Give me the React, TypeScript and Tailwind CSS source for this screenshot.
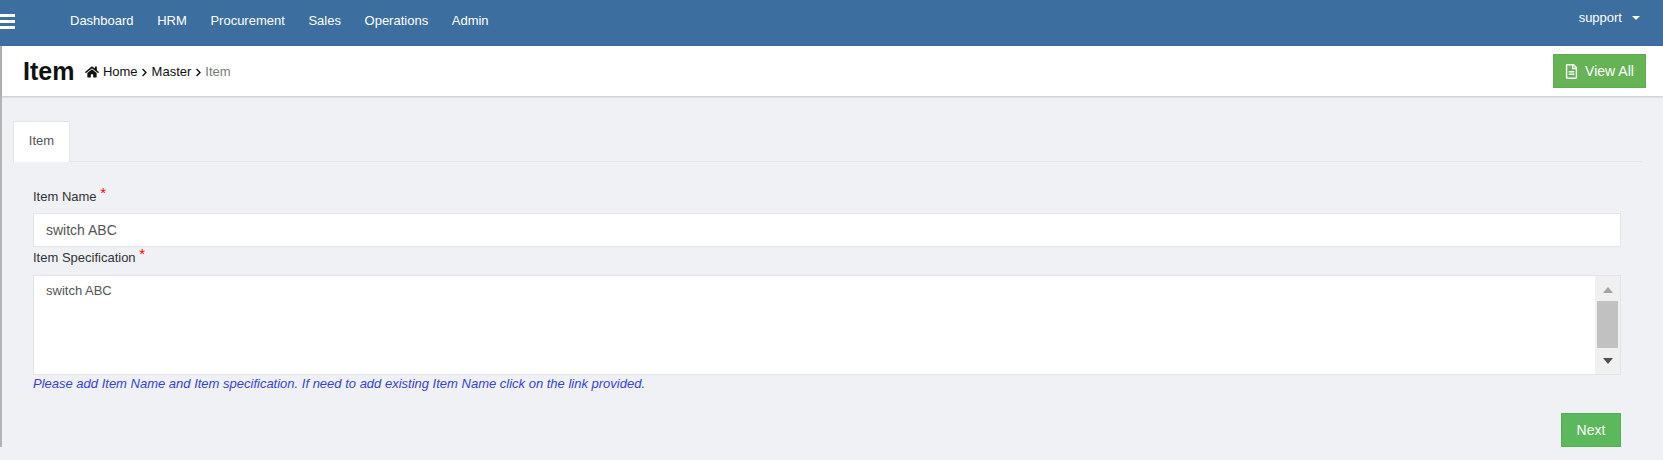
import { FaChevronRight, FaHome, FaRegFileAlt } from 'react-icons/fa';

const navItems = ['Dashboard', 'HRM', 'Procurement', 'Sales', 'Operations', 'Admin'];

function Crumb({ label, muted = false }: { label: string; muted?: boolean }) {
  return <span className={muted ? 'text-[#777]' : 'text-[#111]'}>{label}</span>;
}

export default function App() {
  return (
    <div className="h-[460px] overflow-hidden bg-[#f0f1f5] font-['Liberation_Sans',Arial,sans-serif] text-[13px]">
      <nav className="flex h-[46px] bg-[#3c6e9f] text-white">
        <div className="flex w-[70px] flex-col gap-[3px] pt-[14px]">
          <span className="h-[3px] w-[15px] bg-white" />
          <span className="h-[3px] w-[15px] bg-white" />
          <span className="h-[3px] w-[15px] bg-white" />
        </div>
        <ul className="flex gap-[23.6px] pt-3 leading-[17px]">
          {navItems.map((item) => (
            <li key={item}>{item}</li>
          ))}
        </ul>
        <div className="ml-auto flex items-start pr-[23px] pt-[9px] leading-[17px]">
          support
          <span className="ml-[10px] mt-[7px] border-x-[4px] border-t-[4px] border-x-transparent border-t-white" />
        </div>
      </nav>

      <div className="border-l-2 border-[#b4b4b4]">
        <header className="flex h-[50px] items-center bg-white pl-[21px] pr-[17px] shadow-[0_1px_2px_rgba(0,0,0,0.18)]">
          <h1 className="text-[25px] font-bold leading-7 text-[#111]">Item</h1>
          <div className="ml-[11px] mt-[2px] flex items-center gap-[2.5px]">
            <FaHome className="mr-[1px] text-[14px] text-[#111]" />
            <Crumb label="Home" />
            <FaChevronRight className="text-[9px] text-[#111]" />
            <Crumb label="Master" />
            <FaChevronRight className="text-[9px] text-[#111]" />
            <Crumb label="Item" muted />
          </div>
          <button className="ml-auto flex h-[34px] w-[93px] items-center justify-center gap-[6px] border border-[#5fae4e] bg-[#65b354] pr-[1px] text-sm text-white">
            <FaRegFileAlt className="text-[15px]" />
            View All
          </button>
        </header>

        <main className="pl-[11px] pr-[21px] pt-[25px]">
          <div className="flex h-[41px] border-b border-[#e3e4e8]">
            <div className="flex h-[41px] w-[57px] items-center justify-center border border-b-0 border-[#e3e4e8] bg-white pb-[2px] text-[#555]">
              Item
            </div>
          </div>

          <form className="mr-[21px] pl-[20px] pt-[26px]">
            <label className="block leading-[18px] text-[#333]">
              Item Name <span className="relative top-[-3px] text-[15px] leading-[10px] text-[#f00]">*</span>
            </label>
            <div className="mt-[7px] flex h-[34px] items-center border border-[#e3e4e8] bg-white pl-3 text-sm text-[#555]">
              switch ABC
            </div>
            <label className="mt-[2px] block leading-[18px] text-[#333]">
              Item Specification <span className="relative top-[-3px] text-[15px] leading-[10px] text-[#f00]">*</span>
            </label>
            <div className="mt-[8px] flex h-[100px] border border-[#e3e4e8] bg-white">
              <div className="flex-1 pl-3 pt-[6px] leading-[18px] text-[#555]">switch ABC</div>
              <div className="flex w-[25px] flex-col items-center bg-[#f0f0f0]">
                <span className="mt-[11px] border-x-[5.5px] border-b-[6px] border-x-transparent border-b-[#a3a3a3]" />
                <span className="mt-[8px] h-[47px] w-[21px] bg-[#c1c1c1]" />
                <span className="mt-[10px] border-x-[5.5px] border-t-[6px] border-x-transparent border-t-[#505050]" />
              </div>
            </div>
            <p className="mt-[1px] text-[13px] italic leading-[16px] text-[#3344dd]">
              Please add Item Name and Item specification. If need to add existing Item Name click on the link provided.
            </p>
            <div className="mt-[21px] flex justify-end">
              <button className="h-[34px] w-[60px] border border-[#55ad55] bg-[#5cb85c] text-sm text-white">Next</button>
            </div>
          </form>
        </main>
      </div>
    </div>
  );
}
